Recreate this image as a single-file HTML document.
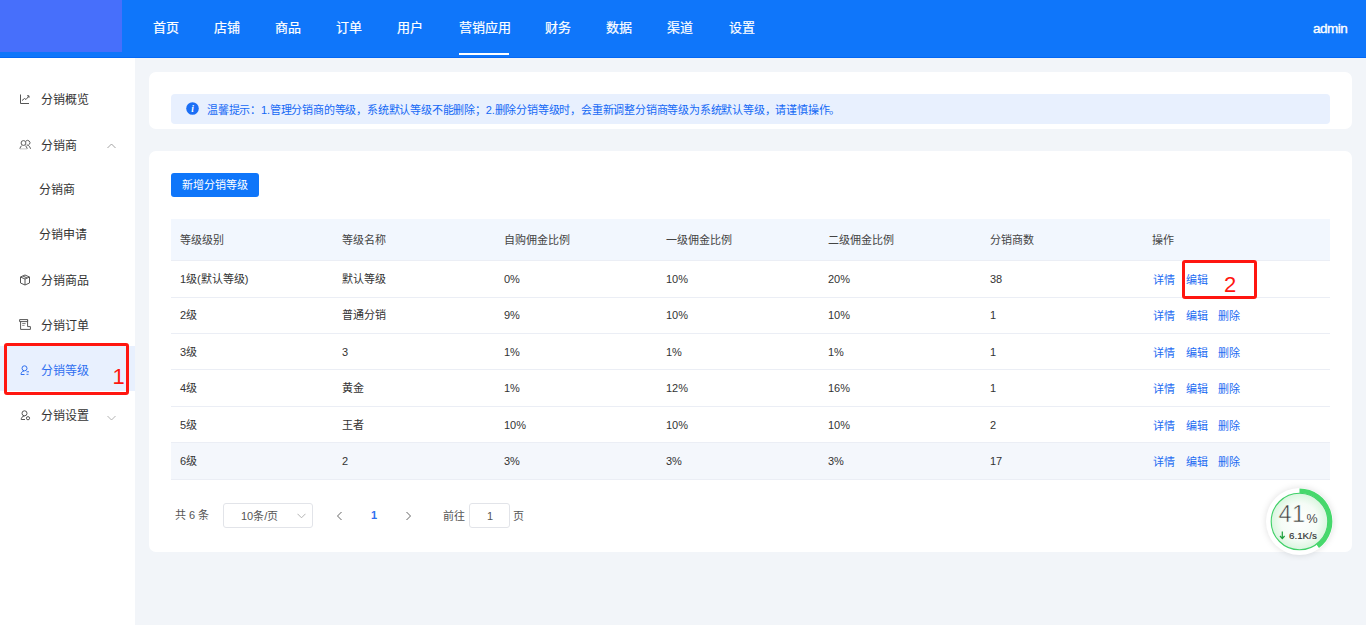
<!DOCTYPE html>
<html lang="zh-CN">
<head>
<meta charset="utf-8">
<style>
*{margin:0;padding:0;box-sizing:border-box}
html,body{width:1366px;height:625px;overflow:hidden}
body{font-family:"Liberation Sans",sans-serif;background:#f2f5f9;position:relative;color:#333}
#hdr{position:absolute;left:0;top:0;width:1366px;height:58px;background:#0f76fa;border-bottom:1px solid #0468f5}
#logo{position:absolute;left:0;top:0;width:122px;height:52px;background:#476ffb}
.nav{position:absolute;top:17.5px;height:20px;line-height:20px;font-size:13px;color:#fff;white-space:nowrap;-webkit-text-stroke:0.2px #fff}
#uline{position:absolute;left:459px;top:53px;width:50px;height:2px;background:#fff}
#side{position:absolute;left:0;top:58px;width:135px;height:567px;background:#fff}
.si{position:absolute;left:0;width:135px;height:45px;font-size:12px;line-height:45px;color:#333;white-space:nowrap}
.si .t{position:absolute;left:41px;top:1px}
.si svg{position:absolute;left:19px;top:16px}
.card{position:absolute;left:149px;width:1203px;background:#fff;border-radius:7px}
#notice{position:absolute;left:171px;top:94px;width:1159px;height:30px;background:#e8f0fe;border-radius:4px}
#ntxt{position:absolute;left:207px;top:102.6px;font-size:11px;line-height:15px;color:#1468f5;white-space:nowrap;letter-spacing:-0.2px}
#btn{position:absolute;left:171px;top:173px;width:88px;height:24px;background:#0f76fa;border-radius:3px;color:#fff;font-size:11px;line-height:24px;text-align:center;font-weight:500}
#th{position:absolute;left:171px;top:219px;width:1159px;height:41px;background:#f2f7fe}
.rl{position:absolute;left:171px;width:1159px;height:1px;background:#ebeef5}
.c{position:absolute;font-size:11px;line-height:16px;color:#333;white-space:nowrap}
.h{color:#444}
.n{letter-spacing:-0.3px}
.lk{color:#1d6cf2;margin-top:1px}
.red{position:absolute;border:3px solid #ff1610;border-radius:3px}
.rnum{position:absolute;color:#ff1610;font-size:22px;line-height:22px;font-family:"Liberation Sans",sans-serif}
.pg{position:absolute;font-size:11px;line-height:16px;color:#555;white-space:nowrap}
.box{position:absolute;border:1px solid #e2e4e9;border-radius:3px;background:#fff}
</style>
</head>
<body>
<div id="hdr"><div id="logo"></div>
<div class="nav" style="left:153px">首页</div>
<div class="nav" style="left:214px">店铺</div>
<div class="nav" style="left:275px">商品</div>
<div class="nav" style="left:336px">订单</div>
<div class="nav" style="left:397px">用户</div>
<div class="nav" style="left:459px">营销应用</div>
<div class="nav" style="left:545px">财务</div>
<div class="nav" style="left:606px">数据</div>
<div class="nav" style="left:667px">渠道</div>
<div class="nav" style="left:729px">设置</div>
<div id="uline"></div>
<div class="nav" style="left:1313px;top:19px;font-size:13.5px;letter-spacing:-0.5px;-webkit-text-stroke:0.35px #fff">admin</div>
</div>

<div id="side">
<div class="si" style="top:19px">
<svg width="12" height="12" viewBox="0 0 12 12" fill="none" stroke="#555" stroke-width="1"><path d="M1.5 1.5V10.5H10"/><path d="M3 7.5L5.5 5.5L7 6.5L9.8 3.2"/><path d="M8 2.8H10V4.8"/></svg>
<span class="t">分销概览</span></div>
<div class="si" style="top:65px">
<svg width="13" height="12" viewBox="0 0 13 12" fill="none" stroke="#555" stroke-width="0.95"><circle cx="4.5" cy="4" r="2.4"/><path d="M6.9 2.1A2.4 2.4 0 1 1 7.6 6"/><path d="M2.7 6.6Q1.2 7.8 0.9 9.8M6.3 6.6Q7.8 7.8 8.2 9.8M9.2 6.3Q11 7.6 11.6 9.8"/><path d="M1 9.9H8" stroke="#bbb" stroke-width="0.8"/></svg>
<span class="t">分销商</span>
<svg style="left:107px;top:20px" width="9" height="6" viewBox="0 0 9 6" fill="none" stroke="#999" stroke-width="0.9"><path d="M0.5 5L4.5 1L8.5 5"/></svg>
</div>
<div class="si" style="top:109px"><span class="t" style="left:39px">分销商</span></div>
<div class="si" style="top:154px"><span class="t" style="left:39px">分销申请</span></div>
<div class="si" style="top:200px">
<svg width="12" height="12" viewBox="0 0 12 12" fill="none" stroke="#555" stroke-width="1"><path d="M6 1L10.5 3V9L6 11L1.5 9V3Z"/><path d="M1.5 3L6 5L10.5 3"/><path d="M6 5V11"/><path d="M3.8 2L8.2 4"/></svg>
<span class="t">分销商品</span></div>
<div class="si" style="top:245px">
<svg width="12" height="12" viewBox="0 0 12 12" fill="none" stroke="#555" stroke-width="1"><path d="M0.6 0.6H8.6V2.6H0.6Z"/><path d="M1.6 2.6V10.4H11.4V7.6H8.6V0.6"/><path d="M3.2 4.6H6.6" stroke="#777"/><path d="M3.2 6.5H5.6" stroke="#999"/></svg>
<span class="t">分销订单</span></div>
<div class="si" style="top:288px;background:#e8f0fe;color:#2f6ff0">
<svg style="top:18px" width="12" height="12" viewBox="0 0 12 12" fill="none" stroke="#2f6ff0" stroke-width="1"><circle cx="5.5" cy="4.3" r="2.5"/><path d="M2 10.5C2 8.8 3 7.2 5 7"/><path d="M2 10.5H5.5"/><path d="M7.5 7.8H10M7.5 10.3H9.5"/></svg>
<span class="t" style="top:3px">分销等级</span></div>
<div class="si" style="top:335px">
<svg width="12" height="12" viewBox="0 0 12 12" fill="none" stroke="#555" stroke-width="1"><circle cx="5.5" cy="4.3" r="2.5"/><path d="M2.2 10.5C2.2 8.8 3.3 7.2 5.5 7"/><path d="M2.2 10.5H6"/><circle cx="9" cy="9.2" r="1.6"/></svg>
<span class="t">分销设置</span>
<svg style="left:107px;top:22px" width="9" height="6" viewBox="0 0 9 6" fill="none" stroke="#aaa" stroke-width="0.9"><path d="M0.5 1L4.5 5L8.5 1"/></svg>
</div>
</div>

<div class="card" style="top:72px;height:57px"></div>
<div id="notice"></div>
<svg style="position:absolute;left:186px;top:102px" width="13" height="13" viewBox="0 0 13 13"><circle cx="6.5" cy="6.5" r="6.3" fill="#1c6ff5"/><text x="6.5" y="10.3" font-size="9.5" font-weight="bold" font-style="italic" fill="#fff" text-anchor="middle" font-family="Liberation Serif">i</text></svg>
<div id="ntxt">温馨提示：1.管理分销商的等级，系统默认等级不能删除；2.删除分销等级时，会重新调整分销商等级为系统默认等级，请谨慎操作。</div>

<div class="card" style="top:151px;height:401px"></div>
<div id="btn">新增分销等级</div>
<div id="th"></div>
<div style="position:absolute;left:171px;top:442px;width:1159px;height:37px;background:#f4f7fc"></div>
<div class="rl" style="top:260px"></div>
<div class="rl" style="top:297px"></div>
<div class="rl" style="top:333px"></div>
<div class="rl" style="top:369px"></div>
<div class="rl" style="top:406px"></div>
<div class="rl" style="top:442px"></div>
<div class="rl" style="top:479px"></div>

<div class="c h" style="left:180px;top:232px">等级级别</div>
<div class="c h" style="left:342px;top:232px">等级名称</div>
<div class="c h" style="left:504px;top:232px">自购佣金比例</div>
<div class="c h" style="left:666px;top:232px">一级佣金比例</div>
<div class="c h" style="left:828px;top:232px">二级佣金比例</div>
<div class="c h" style="left:990px;top:232px">分销商数</div>
<div class="c h" style="left:1152px;top:232px">操作</div>

<div class="c" style="left:180px;top:271px">1级(默认等级)</div>
<div class="c" style="left:342px;top:271px">默认等级</div>
<div class="c" style="left:504px;top:271px">0%</div>
<div class="c" style="left:666px;top:271px">10%</div>
<div class="c" style="left:828px;top:271px">20%</div>
<div class="c" style="left:990px;top:271px">38</div>
<div class="c lk" style="left:1153px;top:271px">详情</div>
<div class="c lk" style="left:1186px;top:271px">编辑</div>
<div class="c" style="left:180px;top:307px">2级</div>
<div class="c" style="left:342px;top:307px">普通分销</div>
<div class="c" style="left:504px;top:307px">9%</div>
<div class="c" style="left:666px;top:307px">10%</div>
<div class="c" style="left:828px;top:307px">10%</div>
<div class="c" style="left:990px;top:307px">1</div>
<div class="c lk" style="left:1153px;top:307px">详情</div>
<div class="c lk" style="left:1186px;top:307px">编辑</div>
<div class="c lk" style="left:1218px;top:307px">删除</div>
<div class="c" style="left:180px;top:343.5px">3级</div>
<div class="c" style="left:342px;top:343.5px">3</div>
<div class="c" style="left:504px;top:343.5px">1%</div>
<div class="c" style="left:666px;top:343.5px">1%</div>
<div class="c" style="left:828px;top:343.5px">1%</div>
<div class="c" style="left:990px;top:343.5px">1</div>
<div class="c lk" style="left:1153px;top:343.5px">详情</div>
<div class="c lk" style="left:1186px;top:343.5px">编辑</div>
<div class="c lk" style="left:1218px;top:343.5px">删除</div>
<div class="c" style="left:180px;top:380px">4级</div>
<div class="c" style="left:342px;top:380px">黄金</div>
<div class="c" style="left:504px;top:380px">1%</div>
<div class="c" style="left:666px;top:380px">12%</div>
<div class="c" style="left:828px;top:380px">16%</div>
<div class="c" style="left:990px;top:380px">1</div>
<div class="c lk" style="left:1153px;top:380px">详情</div>
<div class="c lk" style="left:1186px;top:380px">编辑</div>
<div class="c lk" style="left:1218px;top:380px">删除</div>
<div class="c" style="left:180px;top:416.5px">5级</div>
<div class="c" style="left:342px;top:416.5px">王者</div>
<div class="c" style="left:504px;top:416.5px">10%</div>
<div class="c" style="left:666px;top:416.5px">10%</div>
<div class="c" style="left:828px;top:416.5px">10%</div>
<div class="c" style="left:990px;top:416.5px">2</div>
<div class="c lk" style="left:1153px;top:416.5px">详情</div>
<div class="c lk" style="left:1186px;top:416.5px">编辑</div>
<div class="c lk" style="left:1218px;top:416.5px">删除</div>
<div class="c" style="left:180px;top:452.5px">6级</div>
<div class="c" style="left:342px;top:452.5px">2</div>
<div class="c" style="left:504px;top:452.5px">3%</div>
<div class="c" style="left:666px;top:452.5px">3%</div>
<div class="c" style="left:828px;top:452.5px">3%</div>
<div class="c" style="left:990px;top:452.5px">17</div>
<div class="c lk" style="left:1153px;top:452.5px">详情</div>
<div class="c lk" style="left:1186px;top:452.5px">编辑</div>
<div class="c lk" style="left:1218px;top:452.5px">删除</div>

<div class="pg" style="left:175px;top:507px">共 6 条</div>
<div class="box" style="left:223px;top:503px;width:90px;height:25px"></div>
<div class="pg" style="left:241px;top:508px">10条/页</div>
<svg style="position:absolute;left:297px;top:513px" width="9" height="6" viewBox="0 0 9 6" fill="none" stroke="#aaa" stroke-width="0.9"><path d="M0.5 0.8L4.5 4.8L8.5 0.8"/></svg>
<svg style="position:absolute;left:336px;top:511px" width="7" height="10" viewBox="0 0 7 10" fill="none" stroke="#666" stroke-width="1"><path d="M5.5 1L1.5 5L5.5 9"/></svg>
<div class="pg" style="left:371px;top:507px;color:#2f6ff0;font-weight:bold">1</div>
<svg style="position:absolute;left:405px;top:511px" width="7" height="10" viewBox="0 0 7 10" fill="none" stroke="#666" stroke-width="1"><path d="M1.5 1L5.5 5L1.5 9"/></svg>
<div class="pg" style="left:443px;top:508px">前往</div>
<div class="box" style="left:469px;top:503px;width:41px;height:25px"></div>
<div class="pg" style="left:487px;top:508px">1</div>
<div class="pg" style="left:513px;top:508px">页</div>

<div class="red" style="left:4px;top:343px;width:125px;height:52px"></div>
<div class="rnum" style="left:112.5px;top:366px">1</div>
<div class="red" style="left:1182px;top:260px;width:75px;height:39px"></div>
<div class="rnum" style="left:1224px;top:274px">2</div>

<div style="position:absolute;left:1266px;top:488px;width:67px;height:67px;border-radius:50%;background:#fff;box-shadow:0 0 7px rgba(0,0,0,0.13)"></div>
<svg style="position:absolute;left:1266px;top:488px" width="67" height="67" viewBox="0 0 67 67">
<defs><radialGradient id="g" cx="50%" cy="50%" r="50%"><stop offset="0%" stop-color="#fff"/><stop offset="65%" stop-color="#f5fcf6"/><stop offset="100%" stop-color="#d9f5de"/></radialGradient></defs>
<circle cx="33.5" cy="33.5" r="28.3" fill="url(#g)" stroke="#40d068" stroke-width="1.1"/>
<path d="M33.5 2.8A30.7 30.7 0 0 1 51.6 58.2" fill="none" stroke="#47d86c" stroke-width="4.6"/>
<text x="12.6" y="34.2" font-size="23.5" fill="#3c3c3c" stroke="#f3fbf4" stroke-width="0.55" font-family="Liberation Sans" letter-spacing="0.3">41</text>
<text x="40.5" y="35" font-size="12.5" fill="#4a4a4a" font-family="Liberation Sans">%</text>
<path d="M16.3 43.5V50.3M14 48L16.3 50.6L18.6 48" fill="none" stroke="#1a9e3a" stroke-width="1.2"/>
<text x="23" y="50.8" font-size="9.8" fill="#333" stroke="#333" stroke-width="0.15" font-family="Liberation Sans" letter-spacing="0">6.1K/s</text>
</svg>
</body>
</html>
